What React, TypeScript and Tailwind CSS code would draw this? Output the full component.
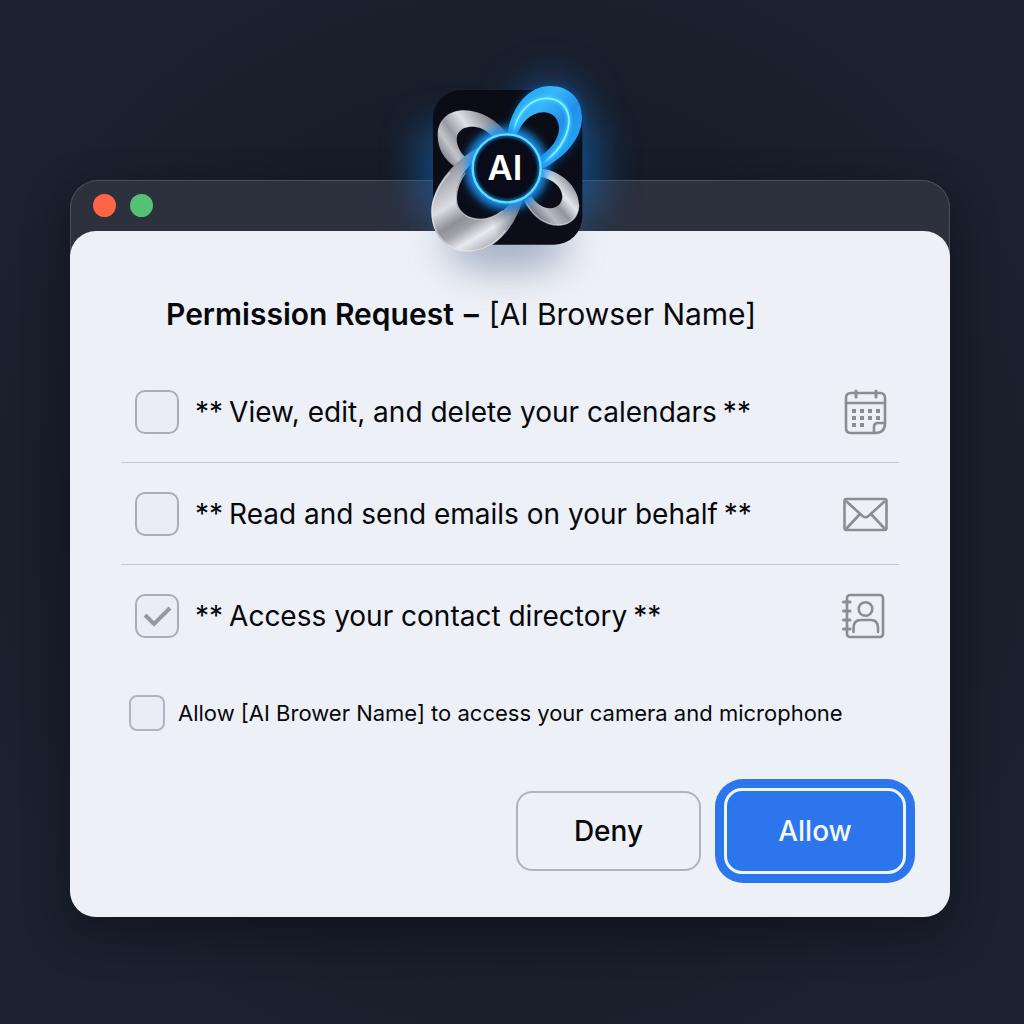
import type { ReactNode } from "react";

function AppBadge() {
  return (
    <svg viewBox="0 0 660 660" className="h-[220px] w-[220px] overflow-visible" role="img" aria-label="AI">
      <defs>
        <linearGradient id="tile" x1="0" y1="0" x2="0" y2="1">
          <stop offset="0" stopColor="#0a0c15" />
          <stop offset="1" stopColor="#0b0e19" />
        </linearGradient>
        <linearGradient id="silverTop" x1="125" y1="265" x2="290" y2="150" gradientUnits="userSpaceOnUse">
          <stop offset="0" stopColor="#77787f" />
          <stop offset="0.2" stopColor="#c3c4ca" />
          <stop offset="0.35" stopColor="#9a9ba2" />
          <stop offset="0.58" stopColor="#dfe0e5" />
          <stop offset="0.75" stopColor="#b4b6bd" />
          <stop offset="0.9" stopColor="#8d8f98" />
          <stop offset="1" stopColor="#5f6e88" />
        </linearGradient>
        <linearGradient id="silverBig" x1="150" y1="270" x2="300" y2="520" gradientUnits="userSpaceOnUse">
          <stop offset="0" stopColor="#85868f" />
          <stop offset="0.2" stopColor="#b4b5bc" />
          <stop offset="0.4" stopColor="#dcdde2" />
          <stop offset="0.58" stopColor="#8e9098" />
          <stop offset="0.68" stopColor="#a0a2a9" />
          <stop offset="0.82" stopColor="#e8eaee" />
          <stop offset="1" stopColor="#a5a8b2" />
        </linearGradient>
        <linearGradient id="silverBigShade" x1="270" y1="440" x2="370" y2="410" gradientUnits="userSpaceOnUse">
          <stop offset="0" stopColor="#4a4f5c" stopOpacity="0" />
          <stop offset="1" stopColor="#3d4452" stopOpacity="0.85" />
        </linearGradient>
        <linearGradient id="silverSmall" x1="400" y1="440" x2="530" y2="330" gradientUnits="userSpaceOnUse">
          <stop offset="0" stopColor="#6a6d78" />
          <stop offset="0.25" stopColor="#b9bbc4" />
          <stop offset="0.45" stopColor="#93959e" />
          <stop offset="0.65" stopColor="#e6e7ec" />
          <stop offset="0.85" stopColor="#a0a2ab" />
          <stop offset="1" stopColor="#6b6e78" />
        </linearGradient>
        <linearGradient id="blueLoop" x1="340" y1="90" x2="520" y2="260" gradientUnits="userSpaceOnUse">
          <stop offset="0" stopColor="#25a5f2" />
          <stop offset="0.3" stopColor="#38b6fb" />
          <stop offset="0.6" stopColor="#2290ea" />
          <stop offset="1" stopColor="#25aaf5" />
        </linearGradient>
        <filter id="halo" filterUnits="userSpaceOnUse" x="-300" y="-300" width="1260" height="1260">
          <feGaussianBlur stdDeviation="58" />
        </filter>
        <filter id="glow" filterUnits="userSpaceOnUse" x="0" y="-60" width="700" height="700">
          <feGaussianBlur stdDeviation="12" />
        </filter>
        <filter id="glowThin" filterUnits="userSpaceOnUse" x="0" y="0" width="660" height="660">
          <feGaussianBlur stdDeviation="4" />
        </filter>
        <clipPath id="aboveSheet">
          <rect x="-300" y="-300" width="1260" height="783" />
        </clipPath>
      </defs>
      <g clipPath="url(#aboveSheet)">
        <path d="M60 170 H600 V440 H60 Z" fill="#1768b8" opacity="0.6" filter="url(#halo)" />
        <circle cx="450" cy="130" r="110" fill="#1768b8" opacity="0.5" filter="url(#halo)" />
      </g>
      <ellipse cx="320" cy="520" rx="190" ry="80" fill="#7688a5" opacity="0.65" filter="url(#halo)" />
      <rect x="99" y="60" width="448" height="464" rx="84" fill="url(#tile)" />
      <path
        d="M325 196 C290 148 240 121 193 121 C145 121 113 150 113 195 C113 235 130 268 168 292 L230 262 L196 262 C174 240 166 214 172 195 C180 175 200 169 222 170 C245 172 262 182 280 204 Z"
        fill="url(#silverTop)"
      />
      <path
        fillRule="evenodd"
        d="M258 222 C175 255 94 345 94 425 C94 500 145 546 207 546 C292 546 352 460 372 372 Z M232 268 C190 295 168 345 168 385 C168 425 200 448 243 448 C285 446 320 418 342 385 Z"
        fill="url(#silverBig)"
      />
      <path
        fillRule="evenodd"
        d="M258 222 C175 255 94 345 94 425 C94 500 145 546 207 546 C292 546 352 460 372 372 Z M232 268 C190 295 168 345 168 385 C168 425 200 448 243 448 C285 446 320 418 342 385 Z"
        fill="url(#silverBigShade)"
      />
      <path d="M150 308 C115 345 96 390 96 425 C96 498 146 543 207 543 C250 543 288 518 316 482" fill="none" stroke="#e2e3e8" strokeWidth="4" opacity="0.7" />
      <path d="M196 308 C178 333 169 362 169 385 C169 425 200 448 243 448 C268 446 290 436 308 422" fill="none" stroke="#dcdee4" strokeWidth="4" opacity="0.75" />
      <path
        d="M424 296 C482 300 537 352 537 404 C537 442 510 466 475 466 C432 465 397 435 372 392 L394 378 C405 398 428 414 448 415 C470 415 487 402 487 378 C485 350 460 328 420 320 Z"
        fill="url(#silverSmall)"
      />
      <path d="M378 398 C400 440 435 465 475 465 C510 465 536 442 536 404" fill="none" stroke="#d4d6de" strokeWidth="4" opacity="0.7" />
      <path
        d="M336 185 C350 110 390 58 450 58 C510 58 536 95 536 145 C536 200 490 260 430 290"
        fill="none"
        stroke="#0b6fe0"
        strokeWidth="22"
        opacity="0.45"
        filter="url(#glow)"
      />
      <path
        d="M322 192 C335 110 385 48 450 48 C510 48 546 88 546 143 C546 205 492 265 424 298 L418 262 C455 235 478 205 477 172 C474 142 455 127 430 127 C392 128 362 158 348 202 Z"
        fill="url(#blueLoop)"
      />
      <path
        d="M340 188 C350 130 390 85 440 85 C486 86 508 118 507 158 C502 212 465 255 424 282"
        fill="none"
        stroke="#3fd0ff"
        strokeWidth="12"
        filter="url(#glowThin)"
      />
      <path d="M340 188 C350 130 390 85 440 85 C486 86 508 118 507 158 C502 212 465 255 424 282" fill="none" stroke="#8cf0ff" strokeWidth="5" />
      <circle cx="320" cy="295" r="108" fill="none" stroke="#1c93f5" strokeWidth="30" filter="url(#glow)" />
      <circle cx="320" cy="295" r="102" fill="#0a0b18" />
      <circle cx="320" cy="295" r="101" fill="none" stroke="#149dff" strokeWidth="14" opacity="0.7" filter="url(#glowThin)" />
      <circle cx="320" cy="295" r="102" fill="none" stroke="#62dcff" strokeWidth="7" />
      <text x="315" y="331" textAnchor="middle" fontSize="104" fontWeight="600" fill="#ffffff" className="font-['Inter',sans-serif]">
        AI
      </text>
    </svg>
  );
}

function CalendarIcon() {
  return (
    <svg viewBox="0 0 46 48" className="h-12 w-[46px]" fill="none" stroke="#8b8d92" strokeWidth="2.6" aria-hidden="true">
      <path d="M42 36 V10 Q42 5 37 5 H8 Q3 5 3 10 V40 Q3 45 8 45 H32 Q42 45 42 35 H35 Q31 35 31 39 V45" />
      <path d="M3 15 H42" />
      <path d="M13 3 V9 M33 3 V9" strokeWidth="3" strokeLinecap="round" />
      <path d="M9 23 H37 M9 30 H37 M9 37 H22" strokeWidth="4" strokeDasharray="4 4" />
    </svg>
  );
}

function MailIcon() {
  return (
    <svg viewBox="0 0 46 48" className="h-12 w-[46px]" fill="none" stroke="#8b8d92" strokeWidth="2.6" aria-hidden="true">
      <rect x="1.500" y="9" width="42" height="31" rx="2" />
      <path d="M3 11 L19.500 26 Q22.500 28.500 25.500 26 L42 11 M3 39 L17 24 M42 39 L28 24" />
    </svg>
  );
}

function ContactIcon() {
  return (
    <svg viewBox="0 0 46 48" className="h-12 w-[46px] overflow-visible" fill="none" stroke="#8b8d92" strokeWidth="2.6" aria-hidden="true">
      <rect x="4" y="3" width="36" height="42" rx="3" />
      <circle cx="22.500" cy="17" r="6.800" />
      <path d="M10.500 40 V36 Q10.500 28 18 28 H28 Q35 28 35 36 V40" strokeLinecap="round" />
      <path d="M0.500 10 H7 M0.500 19 H7 M0.500 28 H7 M0.500 37 H7" strokeWidth="3" strokeLinecap="round" />
    </svg>
  );
}

function PermissionRow({ id, label, icon, checked = false }: { id: string; label: string; icon: ReactNode; checked?: boolean }) {
  return (
    <li className="flex h-[102px] items-center border-b border-[#c3c7cd] pr-[10px] pl-[14px] last:border-b-0">
      <span className="grid shrink-0">
        <input
          id={id}
          type="checkbox"
          defaultChecked={checked}
          className="peer col-start-1 row-start-1 size-11 appearance-none rounded-[10px] border-2 border-[#a9adb8] bg-[#eaedf5]"
        />
        <svg
          viewBox="0 0 44 44"
          className="pointer-events-none invisible col-start-1 row-start-1 size-11 peer-checked:visible"
          fill="none"
          stroke="#96989d"
          strokeWidth="4"
          aria-hidden="true"
        >
          <path d="M10 21 L19 30 L35 14" />
        </svg>
      </span>
      <label htmlFor={id} className="ml-4 flex grow gap-1.5 text-[28px] leading-9 text-[#07080b]">
        <span>**</span>
        <span>{label}</span>
        <span>**</span>
      </label>
      {icon}
    </li>
  );
}

export default function App() {
  return (
    <main className="min-h-screen bg-[radial-gradient(circle_at_center,#161a26_40%,#1b212e_80%)] pt-[180px] pr-[74px] pb-[106px] pl-[70px] font-['Inter',sans-serif]">
      <section
        aria-labelledby="dialog-title"
        className="relative mx-auto w-full max-w-[880px] rounded-[28px] bg-[#2d303d] shadow-[0_16px_40px_0_rgba(10,11,20,0.5)] ring-1 ring-[#4b4f5b] ring-inset"
      >
        <div className="flex h-[51px] items-center gap-[14px] px-[23px]">
          <span className="size-[23px] rounded-full bg-[#ff6545]" />
          <span className="size-[23px] rounded-full bg-[#55c172]" />
        </div>
        <div className="rounded-[26px] bg-[#edf0f6] px-[51px] pt-[61px] pb-[34px]">
          <h1 id="dialog-title" className="ml-[45px] flex gap-2.5 text-[30px] leading-[44px] font-semibold text-[#07080b]">
            <span>Permission Request</span>
            <span>–</span>
            <span className="font-normal">[AI Browser Name]</span>
          </h1>
          <ul className="mt-[25px]">
            <PermissionRow id="calendars" label="View, edit, and delete your calendars" icon={<CalendarIcon />} />
            <PermissionRow id="emails" label="Read and send emails on your behalf" icon={<MailIcon />} />
            <PermissionRow id="contacts" label="Access your contact directory" icon={<ContactIcon />} checked />
          </ul>
          <div className="mt-7 flex items-center gap-[13px] pl-2">
            <input id="media" type="checkbox" className="size-9 shrink-0 appearance-none rounded-lg border-2 border-[#b0b4be] bg-[#eaedf5]" />
            <label htmlFor="media" className="text-[22px] leading-9 text-[#07080b]">
              Allow [AI Brower Name] to access your camera and microphone
            </label>
          </div>
          <div className="mt-12 -mr-4 flex items-center justify-end gap-[14px]">
            <button type="button" className="h-20 w-[185px] rounded-2xl border-2 border-[#b0b3bd] text-[28px] font-medium text-[#07080b]">
              Deny
            </button>
            <button type="button" className="h-[104px] w-[200px] rounded-[28px] bg-[#2d75ec] p-[9px] text-[28px] font-medium text-[#f3f8ff]">
              <span className="flex h-full items-center justify-center rounded-[18px] border-[3px] border-[#edf6ff]">Allow</span>
            </button>
          </div>
        </div>
        <div className="pointer-events-none absolute inset-x-0 -top-[110px] flex justify-center">
          <AppBadge />
        </div>
      </section>
    </main>
  );
}
